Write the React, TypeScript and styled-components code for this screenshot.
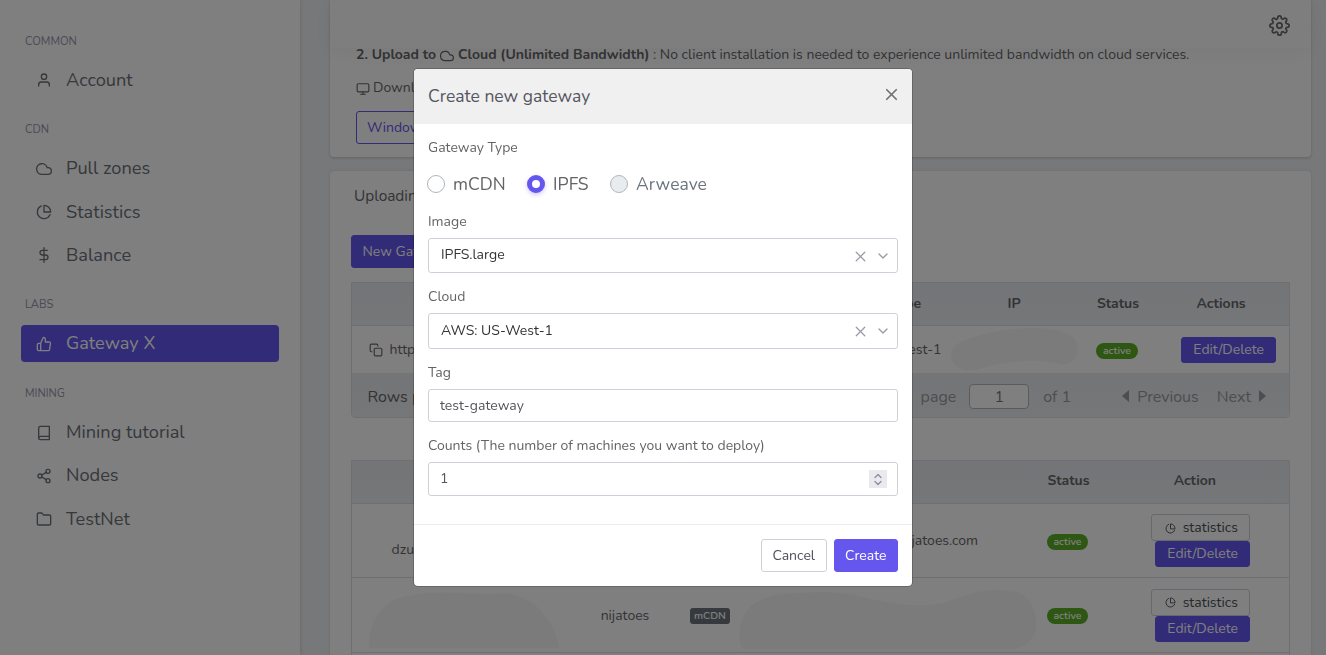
import React from "react";
import styled, { createGlobalStyle, css } from "styled-components";
import type { IconType } from "react-icons";
import {
  FiBook, FiChevronDown, FiChevronUp, FiCloud, FiCopy, FiDollarSign, FiFolder,
  FiMonitor, FiPieChart, FiSettings, FiShare2, FiThumbsUp, FiUser, FiX,
} from "react-icons/fi";

const color = {
  primary: "#6556ee",
  page: "#edf0f4",
  line: "#dcdfe4",
  control: "#cfd0da",
  text: "#66676b",
};

const GlobalStyle = createGlobalStyle`
  *, *::before, *::after { box-sizing: border-box; }
  body {
    margin: 0;
    font: 14px/21px Nunito, Lato, sans-serif;
    color: ${color.text};
    background: ${color.page};
    overflow: hidden;
  }
`;

const Page = styled.div`
  display: flex;
  height: 655px;
  overflow: hidden;
`;

/* Sidebar */

const Sidebar = styled.nav`
  flex: none;
  width: 300px;
  padding: 11px 21px 0;
  background: #fff;
  box-shadow: 0 0 4px rgba(40, 45, 60, 0.2);
`;

const Section = styled.div`
  display: flex;
  flex-direction: column;
`;

const SectionLabel = styled.div`
  margin: 20.9px 0 9.6px 4px;
  font-size: 11.2px;
  line-height: 20.4px;
  text-transform: uppercase;
  color: #9496aa;
`;

const NavItem = styled.a<{ $active?: boolean }>`
  display: flex;
  align-items: center;
  gap: 14px;
  height: 37px;
  margin-bottom: 6.4px;
  padding-left: 15px;
  border-radius: 4px;
  font-size: 18.2px;
  color: #6b7178;
  &:last-child { margin-bottom: ${(p) => (p.$active ? 0.9 : 0.4)}px; }
  ${(p) => p.$active && css`
    color: #fff;
    background: ${color.primary};
  `}
`;

/* Main column */

const Main = styled.main`
  display: flex;
  flex-direction: column;
  gap: 14px;
  width: 981px;
  margin-left: 30px;
`;

const Topbar = styled.header`
  position: fixed;
  top: 0;
  left: 330px;
  display: flex;
  align-items: center;
  justify-content: flex-end;
  width: 981px;
  height: 48px;
  padding: 3px 21px 0;
  background: #fdfdfd;
  color: #6c6c72;
  box-shadow: 0 4px 24px rgba(34, 41, 47, 0.05);
`;

const Card = styled.section<{ $kind: "intro" | "tables" }>`
  flex: none;
  background: #fff;
  border-radius: 4px;
  box-shadow: 0 1px 3px rgba(40, 45, 60, 0.22);
  ${(p) => p.$kind === "intro"
    ? css`height: 157px; padding: 44px 26px 0; border-radius: 0 0 4px 4px;`
    : css`height: 520px; padding: 14px 21px 0; box-shadow: 0 0 3px rgba(40, 45, 60, 0.12);`}
`;

const Line = styled.p<{ $gap: number; $after: number }>`
  display: flex;
  align-items: center;
  gap: ${(p) => p.$gap}px;
  margin: 0 0 ${(p) => p.$after}px;
  svg { position: relative; top: 1px; }
`;

const Strong = styled.strong`
  font-weight: 700;
`;

const Button = styled.button<{ $look: "solid" | "outline" | "plain"; $small?: boolean }>`
  display: inline-flex;
  align-items: center;
  gap: 7px;
  height: ${(p) => (p.$small ? 26 : 33)}px;
  padding: 0 ${(p) => (p.$small ? 11 : 10.5)}px;
  border: 1px solid ${color.primary};
  border-radius: 3px;
  font: 14px/20px Nunito, Lato, sans-serif;
  white-space: nowrap;
  ${(p) => p.$look === "solid" && css`color: #fff; background: ${color.primary};`}
  ${(p) => p.$look === "outline" && css`color: ${color.primary}; background: none; padding: 0 10px;`}
  ${(p) => p.$look === "plain" && css`color: #4e5058; background: none; border-color: ${color.control};`}
  ${(p) => p.$look === "plain" && p.$small && css`height: 27px; padding: 1px 11px 0 13px;`}
`;

const CardTitle = styled.h2`
  margin: 0 0 28px 3px;
  font-size: 15.4px;
  font-weight: 400;
  line-height: 22px;
`;

const CardButton = styled.div`
  display: flex;
  margin-bottom: 14px;
`;

/* Tables */

const Table = styled.div`
  border: 1px solid ${color.line};
  border-radius: 0 0 4px 4px;
  margin-bottom: 42px;
  overflow: hidden;
`;

const gatewayColumns = "248px 229px 113px 144px 64px 1fr";
const domainColumns = "208px 130px 48px 299px 63px 1fr";

const Row = styled.div<{ $columns: string; $height: number; $head?: boolean; $lift?: number }>`
  display: grid;
  grid-template-columns: ${(p) => p.$columns};
  align-items: center;
  height: ${(p) => p.$height}px;
  padding-bottom: ${(p) => p.$lift ?? 0}px;
  white-space: nowrap;
  & + & { border-top: 1px solid ${color.line}; }
  ${(p) => p.$head && css`
    font-weight: 700;
    background: linear-gradient(#e7eaef, #eceef2);
  `}
`;

const Cell = styled.div<{ $align?: "start" | "end"; $pad?: number; $shift?: number }>`
  display: flex;
  align-items: center;
  justify-content: ${(p) => p.$align ?? "center"};
  gap: 6.5px;
  min-width: 0;
  padding: ${(p) => p.$shift ?? 0}px ${(p) => (p.$align === "end" ? p.$pad : 0)}px 0
    ${(p) => (p.$align === "start" ? p.$pad : 0)}px;
`;

const StackedCell = styled.div`
  display: flex;
  flex-direction: column;
  align-items: flex-end;
  padding-right: 39px;
`;

const Badge = styled.span<{ $type?: boolean }>`
  height: 16px;
  padding: 0 ${(p) => (p.$type ? 4 : 6.8)}px;
  margin: 2px ${(p) => (p.$type ? 0 : 2)}px 0 0;
  border-radius: ${(p) => (p.$type ? 3 : 8)}px;
  font-size: 10.5px;
  font-weight: 600;
  line-height: 16px;
  color: #fff;
  background: ${(p) => (p.$type ? "#6c757d" : "#5bae24")};
`;

const Pager = styled.div`
  display: flex;
  align-items: center;
  height: 44px;
  padding: 4px 23px 0 15.5px;
  font-size: 16px;
  background: linear-gradient(#e7eaef, #eceef2);
`;

const PagerNav = styled.div`
  display: flex;
  align-items: center;
  margin-left: auto;
  color: #999ba0;
`;

const PageBox = styled.span`
  width: 60px;
  height: 25px;
  margin: -2px 14px 0 13px;
  border: 1px solid #b4b6ba;
  border-radius: 4px;
  line-height: 24px;
  text-align: center;
  color: #77787c;
  background: #fff;
`;

const PageStep = styled.span<{ $gap: number }>`
  display: inline-flex;
  align-items: center;
  gap: 8px;
  margin-left: ${(p) => p.$gap}px;
  svg { margin-top: -2px; }
`;

const Smudge = styled.svg`
  display: block;
  fill: #f6f6f6;
`;

/* Dialog */

const Backdrop = styled.div`
  position: fixed;
  inset: 0;
  display: flex;
  align-items: flex-start;
  justify-content: center;
  padding-top: 68px;
  background: rgba(0, 0, 0, 0.5);
`;

const Dialog = styled.div`
  width: 500px;
  border: 1px solid rgba(0, 0, 0, 0.2);
  border-radius: 5px;
  background: #fff;
  background-clip: padding-box;
  overflow: hidden;
`;

const DialogHeader = styled.header`
  display: flex;
  align-items: center;
  justify-content: space-between;
  height: 55px;
  padding: 0 11.5px 0 14px;
  background: #f0f0f0;
  font-size: 17.5px;
  color: #55565f;
  svg { color: #737374; margin-top: -4px; }
`;

const DialogBody = styled.div`
  height: 400px;
  padding: 13px 14px 0;
`;

const DialogFooter = styled.footer`
  display: flex;
  justify-content: flex-end;
  gap: 7px;
  height: 62px;
  padding: 14px 14px 0;
  border-top: 1px solid #ececef;
`;

const Field = styled.div`
  margin-bottom: 13px;
`;

const Label = styled.label`
  display: block;
  height: 21px;
  margin-bottom: 6px;
  color: #646466;
`;

const Radios = styled.div`
  display: flex;
  align-items: center;
  gap: 21.4px;
  height: 41px;
  margin: 0 0 6px -1px;
  font-size: 17.5px;
`;

const RadioOption = styled.label<{ $disabled?: boolean }>`
  display: flex;
  align-items: center;
  gap: 8px;
  color: ${(p) => (p.$disabled ? "#6c757d" : "#646466")};
`;

const RadioDot = styled.span<{ $state: "off" | "on" | "disabled" }>`
  width: 18px;
  height: 18px;
  margin-top: -1px;
  border: 1px solid #adb5bd;
  border-radius: 50%;
  background: #fff;
  ${(p) => p.$state === "on" && css`
    border: 5.5px solid ${color.primary};
    box-shadow: 0 2px 4px rgba(101, 86, 238, 0.3);
  `}
  ${(p) => p.$state === "disabled" && css`background: #e9ecef;`}
`;

const Control = styled.div<{ $height: number; $select?: boolean }>`
  display: flex;
  align-items: center;
  justify-content: space-between;
  height: ${(p) => p.$height}px;
  padding: 0 ${(p) => (p.$select ? 6 : 10)}px 0 ${(p) => (p.$select ? 12 : 11)}px;
  border: 1px solid ${color.control};
  border-radius: 3px;
  color: ${(p) => (p.$select ? "#333" : "#55565d")};
`;

const Value = styled.span`
  margin-top: -2px;
`;

const ControlIcons = styled.span`
  display: flex;
  align-items: center;
  gap: 6px;
  color: #9a9aa6;
  svg:first-child { margin-top: 1px; }
`;

const Spinner = styled.span`
  display: flex;
  flex-direction: column;
  align-items: center;
  justify-content: center;
  width: 18px;
  height: 18px;
  background: #e9e9ee;
  color: #8d8d99;
  svg { margin: -2.5px 0; }
`;

const sections: { title: string; items: { icon: IconType; label: string; active?: boolean }[] }[] = [
  { title: "Common", items: [{ icon: FiUser, label: "Account" }] },
  {
    title: "CDN",
    items: [
      { icon: FiCloud, label: "Pull zones" },
      { icon: FiPieChart, label: "Statistics" },
      { icon: FiDollarSign, label: "Balance" },
    ],
  },
  { title: "Labs", items: [{ icon: FiThumbsUp, label: "Gateway X", active: true }] },
  {
    title: "Mining",
    items: [
      { icon: FiBook, label: "Mining tutorial" },
      { icon: FiShare2, label: "Nodes" },
      { icon: FiFolder, label: "TestNet" },
    ],
  },
];

function Select({ value, height }: { value: string; height: number }) {
  return (
    <Control $height={height} $select>
      <Value>{value}</Value>
      <ControlIcons>
        <FiX size={17} strokeWidth={1.8} />
        <FiChevronDown size={16} />
      </ControlIcons>
    </Control>
  );
}

function DomainActions() {
  return (
    <StackedCell>
      <Button $look="plain" $small><FiPieChart size={11} />statistics</Button>
      <Button $look="solid" $small>Edit/Delete</Button>
    </StackedCell>
  );
}

export default function App() {
  return (
    <>
      <GlobalStyle />
      <Page>
        <Sidebar>
          {sections.map((section) => (
            <Section key={section.title}>
              <SectionLabel>{section.title}</SectionLabel>
              {section.items.map(({ icon: Icon, label, active }) => (
                <NavItem key={label} $active={active}>
                  <Icon size={16} />
                  {label}
                </NavItem>
              ))}
            </Section>
          ))}
        </Sidebar>

        <Main>
          <Card $kind="intro">
            <Line $gap={4} $after={12}>
              <Strong>2. Upload to</Strong>
              <FiCloud size={14} />
              <span><Strong>Cloud (Unlimited Bandwidth)</Strong> : No client installation is needed to experience unlimited bandwidth on cloud services.</span>
            </Line>
            <Line $gap={3} $after={13}><FiMonitor size={14} />Download</Line>
            <Button $look="outline">Windows</Button>
          </Card>

          <Card $kind="tables">
            <CardTitle>Uploading</CardTitle>
            <CardButton><Button $look="solid">New Gateway</Button></CardButton>

            <Table>
              <Row $columns={gatewayColumns} $height={42} $lift={1} $head>
                <Cell /><Cell />
                <Cell>Cloud type</Cell>
                <Cell>IP</Cell>
                <Cell>Status</Cell>
                <Cell $align="start" $pad={46.5}>Actions</Cell>
              </Row>
              <Row $columns={gatewayColumns} $height={48}>
                <Cell $align="start" $pad={17}><FiCopy size={14} />https</Cell>
                <Cell />
                <Cell>AWS: US-West-1</Cell>
                <Cell>
                  <Smudge width="127" height="43" viewBox="0 0 127 43">
                    <path d="M0 24C4 12 22 10 38 5C62-1 88-1 104 2C120 4 127 12 127 22C126 32 119 37 110 36C92 32 66 32 44 37C30 40 20 45 10 41C2 37 0 31 0 24Z" />
                  </Smudge>
                </Cell>
                <Cell><Badge>active</Badge></Cell>
                <Cell $align="end" $pad={13}><Button $look="solid" $small>Edit/Delete</Button></Cell>
              </Row>
              <Pager>
                Rows per page
                <PagerNav>
                  page
                  <PageBox>1</PageBox>
                  of 1
                  <PageStep $gap={51}>
                    <svg width="7" height="12" viewBox="0 0 7 12"><path d="M7 0V12L0 6Z" fill="currentColor" /></svg>
                    Previous
                  </PageStep>
                  <PageStep $gap={18}>
                    Next
                    <svg width="7" height="12" viewBox="0 0 7 12"><path d="M0 0V12L7 6Z" fill="currentColor" /></svg>
                  </PageStep>
                </PagerNav>
              </Pager>
            </Table>

            <Table>
              <Row $columns={domainColumns} $height={42} $lift={3} $head>
                <Cell /><Cell /><Cell /><Cell />
                <Cell>Status</Cell>
                <Cell $align="end" $pad={73}>Action</Cell>
              </Row>
              <Row $columns={domainColumns} $height={74}>
                <Cell $align="start" $pad={39.5} $shift={18}>dzu</Cell>
                <Cell /><Cell />
                <Cell $align="end" $pad={59}>nijatoes.com</Cell>
                <Cell><Badge>active</Badge></Cell>
                <DomainActions />
              </Row>
              <Row $columns={domainColumns} $height={75}>
                <Cell $align="start" $pad={17}>
                  <Smudge width="196" height="68" viewBox="0 0 196 68">
                    <path d="M0 68C0 34 18 16 44 14C76 7 106 15 140 12C172 15 192 42 195 68Z" />
                  </Smudge>
                </Cell>
                <Cell>nijatoes</Cell>
                <Cell $align="start" $pad={0}><Badge $type>mCDN</Badge></Cell>
                <Cell>
                  <Smudge width="299" height="68" viewBox="0 0 299 68">
                    <path d="M4 68C-5 40 10 18 40 14C74 10 102 10 128 17C158 23 180 27 206 22C232 10 260 6 280 11C296 18 302 40 296 54C292 62 284 66 276 68Z" />
                  </Smudge>
                </Cell>
                <Cell><Badge>active</Badge></Cell>
                <DomainActions />
              </Row>
              <Row $columns={domainColumns} $height={75} />
            </Table>
          </Card>
        </Main>
      </Page>

      <Topbar><FiSettings size={21} /></Topbar>

      <Backdrop>
        <Dialog role="dialog">
          <DialogHeader>
            Create new gateway
            <FiX size={19} strokeWidth={2.2} />
          </DialogHeader>
          <DialogBody>
            <Label>Gateway Type</Label>
            <Radios>
              <RadioOption><RadioDot $state="off" />mCDN</RadioOption>
              <RadioOption><RadioDot $state="on" />IPFS</RadioOption>
              <RadioOption $disabled><RadioDot $state="disabled" />Arweave</RadioOption>
            </Radios>
            <Field>
              <Label>Image</Label>
              <Select value="IPFS.large" height={35} />
            </Field>
            <Field>
              <Label>Cloud</Label>
              <Select value="AWS: US-West-1" height={36} />
            </Field>
            <Field>
              <Label>Tag</Label>
              <Control $height={33}>test-gateway</Control>
            </Field>
            <Field>
              <Label>Counts (The number of machines you want to deploy)</Label>
              <Control $height={34}>
                <Value>1</Value>
                <Spinner>
                  <FiChevronUp size={12} strokeWidth={2.6} />
                  <FiChevronDown size={12} strokeWidth={2.6} />
                </Spinner>
              </Control>
            </Field>
          </DialogBody>
          <DialogFooter>
            <Button $look="plain">Cancel</Button>
            <Button $look="solid">Create</Button>
          </DialogFooter>
        </Dialog>
      </Backdrop>
    </>
  );
}
